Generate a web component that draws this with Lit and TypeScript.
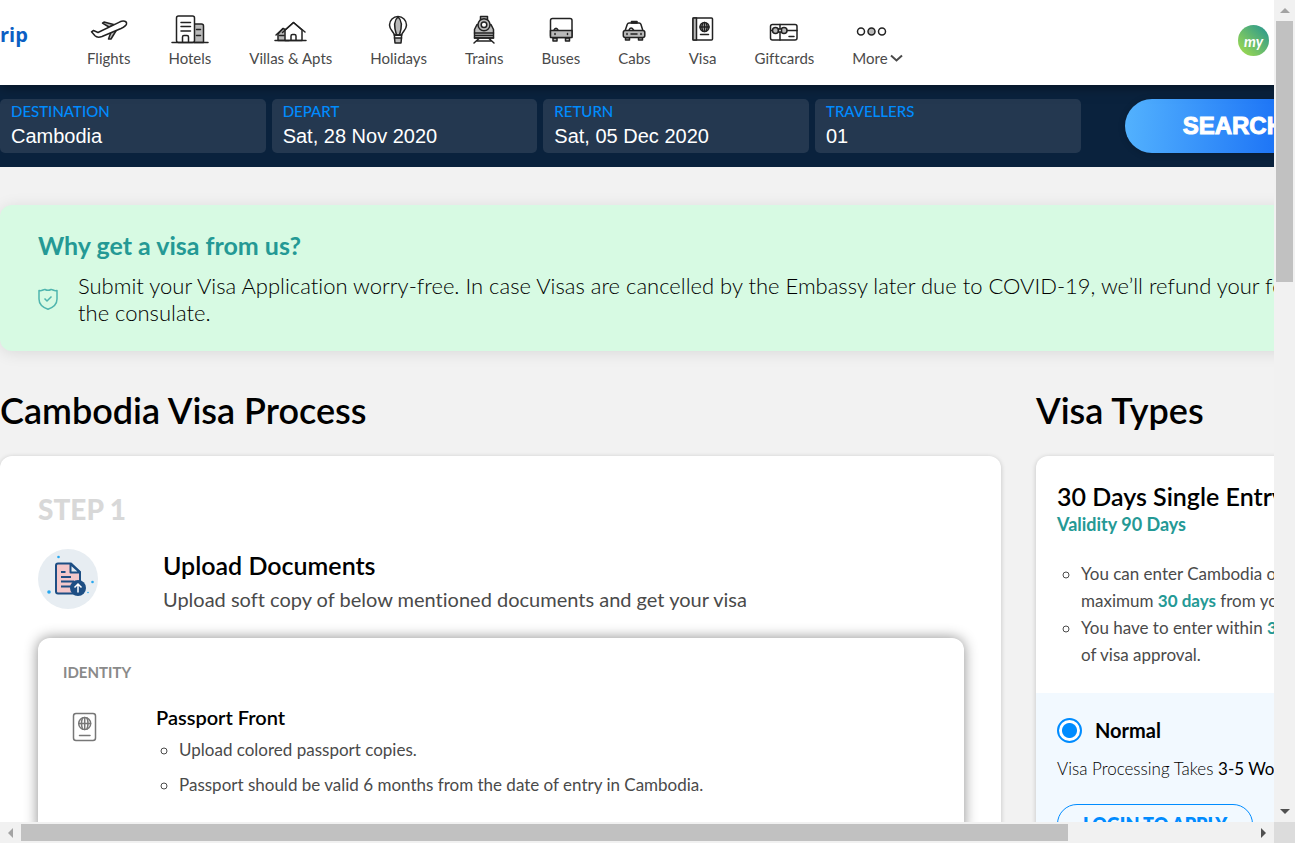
import { LitElement, html, css, svg } from "lit";
import { customElement } from "lit/decorators.js";

const icons = {
  flights: svg`<svg width="38" height="36" viewBox="0 0 38 36" class="icon">
    <path class="shade" d="M19 15 12.500 11.200 14 10 24.500 12.800zM21 20 18.500 27 21 27 26.500 18z"/>
    <path class="paper" d="M1.500 19.800 3.500 18.500 8 20.500 30 9.800C33.500 8.300 37 9.300 36.500 12 36 14 34.500 14.800 31 16.500L12 24.500C9 25.500 6.500 25.300 5 23.800z"/>
  </svg>`,
  hotels: svg`<svg width="38" height="36" viewBox="0 0 38 36" class="icon">
    <path class="shade" d="M23 12h7.500a2 2 0 0 1 2 2v16.500H23z"/>
    <rect class="paper" x="5.500" y="4" width="18" height="26.500" rx="2"/>
    <path d="M10 10.500h9.500M10 14.500h9.500M10 19h9.500M25.500 17.500h4M25.500 23.500h4M11.500 30v-5q0-1.500 1.500-1.500h3q1.500 0 1.500 1.500v5M1 30.500h36"/>
  </svg>`,
  villas: svg`<svg width="38" height="36" viewBox="0 0 38 36" class="icon">
    <path class="shade" d="M6 28.500V22L11 16.500 17 19V28.500z"/>
    <path class="paper" d="M13 28.500V18L21.500 10.500 30 18V28.500z"/>
    <path d="M4 23 11 16.500M10.500 20.500 21.500 10.500 33 20M7.500 23.500H12M19 28v-4q0-1.500 1.500-1.500h2q1.500 0 1.500 1.500v4M3 28.500h31"/>
  </svg>`,
  holidays: svg`<svg width="38" height="36" viewBox="0 0 38 36" class="icon">
    <path class="paper" d="M14.500 23C13 19 9.500 17.500 9.500 13a8.500 8.500 0 0 1 17 0C26.500 17.500 23 19 21.500 23z"/>
    <path class="shade" d="M16.500 23C14 15 14 8 18 5 22 8 22 15 19.500 23z"/>
    <path d="M14 23h8M14.500 23v3M21.500 23v3"/>
    <path class="shade" d="M14.500 26h7l-.5 5h-6z"/>
  </svg>`,
  trains: svg`<svg width="38" height="36" viewBox="0 0 38 36" class="icon">
    <path class="shade" d="M15.500 8V4.500h7v3.500M9.500 23.500h19V26h-19zM9.500 17.500 12 12.500h14L28.500 17.500V23.500h-19z"/>
    <circle class="shade" cx="19" cy="12.800" r="6"/><circle class="paper" cx="19" cy="12.800" r="2.800"/>
    <path d="M9.500 21h19M9.500 26h19M14 26.500 9 31M24 26.500 29 31M12 29h14"/>
  </svg>`,
  buses: svg`<svg width="38" height="36" viewBox="0 0 38 36" class="icon">
    <path class="shade" d="M11 26h4v3h-4zM23.500 26h4v3h-4z"/>
    <rect class="paper" x="8.500" y="6.500" width="21.500" height="19" rx="2"/>
    <path class="shade" d="M8.500 18.500H30v7H8.500zM11.500 18.500q2.500-4.500 5 0"/>
    <path d="M13 21.500v1M25.500 21.500v1"/>
  </svg>`,
  cabs: svg`<svg width="38" height="36" viewBox="0 0 38 36" class="icon">
    <path class="shade" d="M10.500 25.500h4v2.500h-4zM23.500 25.500h4v2.500h-4z"/>
    <path class="paper" d="M10 19 12.300 12.300q.5-1.300 1.800-1.300h10q1.300 0 1.800 1.300L28 19z"/>
    <path class="solid" d="M16.500 9.500h5.500V11h-5.500z"/>
    <rect class="shade" x="8.300" y="18.500" width="21.500" height="7" rx="2"/>
    <path d="M12 21.500v1M26 21.500v1M16 22h6M14 18q2-4 4.500 0"/>
  </svg>`,
  visa: svg`<svg width="38" height="36" viewBox="0 0 38 36" class="icon">
    <rect class="paper" x="9" y="6" width="19.500" height="22" rx="1"/>
    <path class="shade" d="M9 6h3.500v22H9z"/>
    <circle class="shade" cx="20.500" cy="15" r="4.500"/>
    <path d="M16 15h9M20.500 10.500v9M18.500 11.500q-1.500 3.500 0 7M22.500 11.500q1.500 3.500 0 7M16.500 22.500h8"/>
  </svg>`,
  gift: svg`<svg width="38" height="36" viewBox="0 0 38 36" class="icon">
    <rect class="paper" x="5.500" y="12.500" width="26.500" height="15.500" rx="2"/>
    <path d="M6 18.500h26M15 12.500v15.500M24 24.500h5"/>
    <circle class="shade" cx="10.500" cy="18.500" r="3"/><circle class="shade" cx="19" cy="18.500" r="3"/>
    <rect class="paper" x="13.500" y="17" width="3" height="3"/>
  </svg>`,
  more: svg`<svg width="38" height="36" viewBox="0 0 38 36" class="icon">
    <circle class="paper" cx="9" cy="19.500" r="3.500"/><circle class="shade" cx="19.500" cy="19.500" r="3.500"/><circle class="paper" cx="30" cy="19.500" r="3.500"/>
  </svg>`,
};

const navItems = [
  { label: "Flights", icon: icons.flights },
  { label: "Hotels", icon: icons.hotels },
  { label: "Villas & Apts", icon: icons.villas },
  { label: "Holidays", icon: icons.holidays },
  { label: "Trains", icon: icons.trains },
  { label: "Buses", icon: icons.buses },
  { label: "Cabs", icon: icons.cabs },
  { label: "Visa", icon: icons.visa },
  { label: "Giftcards", icon: icons.gift },
  { label: "More", icon: icons.more, menu: true },
];

const fields = [
  { id: "destination", label: "DESTINATION", value: "Cambodia" },
  { id: "depart", label: "DEPART", value: "Sat, 28 Nov 2020" },
  { id: "return", label: "RETURN", value: "Sat, 05 Dec 2020" },
  { id: "travellers", label: "TRAVELLERS", value: "01" },
];

@customElement("app-root")
export class AppRoot extends LitElement {
  static styles = css`
    :host {
      display: grid;
      grid-template-columns: minmax(0, 1fr) 21px;
      grid-template-rows: minmax(0, 1fr) 21px;
      height: 100vh;
      background: #f1f1f1;
      color: #000;
      font-family: Lato, sans-serif;
      font-variant-ligatures: none;
    }
    * { box-sizing: border-box; }
    h1, h2, h3, h4, p, ul { margin: 0; padding: 0; }
    svg { display: block; }
    .view { overflow: hidden; background: #f2f2f2; }
    .page { min-width: 1342px; }

    .header {
      position: relative;
      display: flex;
      align-items: center;
      height: 85px;
      padding-right: 73px;
      background: #fff;
      box-shadow: 0 1px 12px rgba(0, 0, 0, 0.5);
    }
    .logo {
      width: 87px;
      padding-bottom: 16px;
      color: #0b5fc4;
      font: 700 20px/28px "Open Sans", sans-serif;
      text-decoration: none;
    }
    .nav { display: flex; flex: 1; gap: 38px; }
    .nav-item {
      display: flex;
      flex-direction: column;
      align-items: center;
      padding-bottom: 5px;
      color: #4a4a4a;
      font-size: 15px;
      line-height: 20px;
      text-decoration: none;
      white-space: nowrap;
    }
    .nav-label { display: flex; align-items: center; gap: 2px; }
    .icon { margin: 0 -5px; fill: none; stroke: #222; stroke-width: 1.5; stroke-linecap: round; stroke-linejoin: round; }
    .nav-menu .icon { align-self: flex-start; margin: 0; }
    .shade { fill: #b9b9b9; }
    .paper { fill: #fff; }
    .solid { fill: #222; }
    .chevron { fill: none; stroke: #4a4a4a; stroke-width: 2; }
    .avatar {
      width: 31px;
      height: 31px;
      margin-bottom: 4px;
      padding: 0;
      border: 0;
      border-radius: 50%;
      background: linear-gradient(45deg, #a8e04a, #219393);
      color: #fff;
      font: italic 700 15px/28px Lato, sans-serif;
      text-align: center;
    }

    .search { display: flex; gap: 44px; padding: 14px 0; background: #0a223d; }
    .fields { display: grid; grid-template-columns: repeat(4, 1fr); flex: 1; gap: 6px; }
    .field {
      display: flex;
      flex-direction: column;
      gap: 1px;
      height: 54px;
      padding: 2px 11px;
      border-radius: 5px;
      background: #243850;
    }
    .field-label { color: #008cff; font-size: 15px; line-height: 20px; font-weight: 500; }
    .field-input {
      width: 100%;
      padding: 0;
      border: 0;
      outline: 0;
      background: none;
      color: #fff;
      font: 400 20px/28px "Liberation Sans", Arial, sans-serif;
    }
    .search-button {
      padding: 0 58px;
      border: 0;
      border-radius: 27px;
      background: linear-gradient(93deg, #53b2fe, #065af3);
      box-shadow: 0 1px 7px rgba(0, 0, 0, 0.2);
      color: #fff;
      font: 700 24px/28px "Liberation Sans", Arial, sans-serif;
      -webkit-text-stroke: 1px #fff;
    }

    .banner {
      margin-top: 38px;
      padding: 25px 38px;
      border-radius: 12px;
      background: #d7fae3;
      box-shadow: 0 2px 16px rgba(0, 0, 0, 0.1);
    }
    .banner-title { color: #249995; font-size: 25px; line-height: 30px; font-weight: 700; }
    .banner-row { display: flex; align-items: center; gap: 20px; padding-top: 12px; }
    .banner-text { font-size: 22px; line-height: 27px; font-weight: 300; white-space: nowrap; }
    .shield { flex: none; fill: none; stroke: #4fb5ae; stroke-width: 1.5; stroke-linejoin: round; }

    .columns {
      display: grid;
      grid-template-columns: minmax(0, 1fr) 306px;
      gap: 35px;
      padding-top: 37px;
    }
    .heading { padding-bottom: 24px; font-size: 36px; line-height: 44px; font-weight: 600; }
    .card { border-radius: 12px; background: #fff; box-shadow: 0 1px 5px rgba(0, 0, 0, 0.2); overflow: hidden; }
    .process { padding: 35px 37px 38px 38px; }
    .step { color: #d8d8d8; font-size: 28px; line-height: 36px; font-weight: 900; }
    .step-row { display: flex; align-items: center; gap: 65px; padding: 18px 0 25px; }
    .step-copy { padding-top: 4px; }
    .step-title { font-size: 25px; line-height: 32px; font-weight: 600; }
    .step-text { padding-top: 4px; color: #4a4a4a; font-size: 20px; line-height: 28px; }
    .documents {
      padding: 24px 25px 36px;
      border-radius: 12px;
      background: #fff;
      box-shadow: 0 0 14px rgba(0, 0, 0, 0.45);
    }
    .group { color: #8a8a8a; font-size: 15px; line-height: 20px; font-weight: 700; }
    .document { display: flex; align-items: flex-start; gap: 53px; padding-top: 23px; }
    .document-title { font-size: 20px; line-height: 24px; font-weight: 600; }
    .document-icon { margin: 6px 0 0 4px; fill: none; stroke: #777; stroke-width: 1.5; stroke-linecap: round; }
    .list { padding-left: 23px; list-style: circle; color: #4a4a4a; font-size: 17px; }
    .document .list { line-height: 35px; padding-top: 3px; }

    .type-top { padding: 25px 21px; }
    .type-title { font-size: 25px; line-height: 31px; font-weight: 600; white-space: nowrap; }
    .accent { color: #249995; font-weight: 700; }
    .validity { padding-bottom: 23px; font-size: 18px; line-height: 25px; }
    .type-top .list { line-height: 27px; padding-left: 24px; white-space: nowrap; }
    .type-option { padding: 23px 21px 30px; background: #f2f9ff; }
    .option { display: flex; align-items: center; gap: 13px; font-size: 20px; line-height: 28px; font-weight: 700; }
    .radio {
      appearance: none;
      width: 25px;
      height: 25px;
      margin: 0;
      border: 2px solid #008cff;
      border-radius: 50%;
      background: radial-gradient(circle, #008cff 7px, #fff 8px);
    }
    .processing { padding: 11px 0 22px; font-size: 17px; line-height: 27px; font-weight: 300; white-space: nowrap; }
    .strong { font-weight: 400; }
    .apply {
      height: 40px;
      padding: 0 25px;
      border: 1px solid #008cff;
      border-radius: 20px;
      background: none;
      color: #008cff;
      font: 800 18px/24px Lato, sans-serif;
    }

    .bar { display: flex; align-items: center; justify-content: space-between; }
    .bar-y { flex-direction: column; }
    .arrow { display: grid; place-items: center; width: 21px; height: 21px; flex: none; }
    .track { flex: 1; display: flex; }
    .bar-y .track { flex-direction: column; align-items: center; width: 21px; }
    .bar-x .track { align-items: center; height: 21px; }
    .thumb { background: #c1c1c1; }
    .bar-y .thumb { width: 17px; height: 33.4%; }
    .bar-x .thumb { height: 17px; width: 85%; }
    .corner { background: #dcdcdc; }
  `;

  render() {
    return html`
      <div class="view">
        <div class="page">
          <header class="header">
            <a class="logo" href="#">rip</a>
            <nav class="nav">
              ${navItems.map(
                (item) => html`<a class="nav-item ${item.menu ? "nav-menu" : ""}" href="#">
                  ${item.icon}
                  <span class="nav-label">${item.label}${item.menu
                    ? html`<svg class="chevron" width="13" height="8" viewBox="0 0 13 8"><path d="M1 1.500 6.500 6.500 12 1.500"/></svg>`
                    : ""}</span>
                </a>`
              )}
            </nav>
            <button class="avatar">my</button>
          </header>

          <form class="search">
            <div class="fields">
              ${fields.map(
                (f) => html`<div class="field">
                  <label class="field-label" for=${f.id}>${f.label}</label>
                  <input class="field-input" id=${f.id} .value=${f.value} readonly />
                </div>`
              )}
            </div>
            <button class="search-button" type="button">SEARCH</button>
          </form>

          <section class="banner">
            <h3 class="banner-title">Why get a visa from us?</h3>
            <div class="banner-row">
              <svg class="shield" width="20" height="22" viewBox="0 0 20 22">
                <path d="M1 2.500C4 3.500 5.500 1 7 1.500 9 2.500 11 2.500 13 1.500 14.500 1 16 3.500 19 2.500V11C19 16.500 15 19.500 10 21.200 5 19.500 1 16.500 1 11z"/>
                <path d="M6.500 10.500 9 13 13.500 8.500"/>
              </svg>
              <p class="banner-text">
                Submit your Visa Application worry-free. In case Visas are cancelled by the Embassy later due to COVID-19, we’ll refund your fees to<br />the consulate.
              </p>
            </div>
          </section>

          <div class="columns">
            <main>
              <h1 class="heading">Cambodia Visa Process</h1>
              <section class="card process">
                <h2 class="step">STEP 1</h2>
                <div class="step-row">
                  <svg width="60" height="60" viewBox="0 0 60 60">
                    <circle cx="30" cy="30" r="30" fill="#e7edf2"/>
                    <path d="M20 14.500h13L42 23v21.500H20q-2 0-2-2v-26q0-2 2-2z" fill="#f4c7ca" stroke="#1d4e84" stroke-width="2" stroke-linejoin="round"/>
                    <path d="M32.500 15v8.500H42z" fill="#e7edf2" stroke="#1d4e84" stroke-width="2" stroke-linejoin="round"/>
                    <path d="M23 23h4.500M23 28h10M23 32.500h13M23 37.500h11" stroke="#1d4e84" stroke-width="2"/>
                    <circle cx="40" cy="39" r="8" fill="#1d4e84"/>
                    <path d="M40 43.500v-8M36.500 38.500 40 35l3.500 3.500" fill="none" stroke="#fff" stroke-width="1.500"/>
                    <g fill="#27a7ee"><circle cx="20.500" cy="8" r="1.300"/><circle cx="11" cy="43" r="1.800"/><circle cx="54.500" cy="33" r="1.300"/><circle cx="50" cy="43.500" r=".8"/></g>
                  </svg>
                  <div class="step-copy">
                    <h3 class="step-title">Upload Documents</h3>
                    <p class="step-text">Upload soft copy of below mentioned documents and get your visa</p>
                  </div>
                </div>
                <div class="documents">
                  <h4 class="group">IDENTITY</h4>
                  <div class="document">
                    <svg class="document-icon" width="36" height="32" viewBox="0 0 36 32">
                      <rect x="6.500" y="2.500" width="22" height="27" rx="2.500"/>
                      <circle cx="17.700" cy="12.500" r="6"/>
                      <path d="M12 12.500h11.500M17.700 6.500v12M15.500 7q-2 5.500 0 11M20 7q2 5.500 0 11M12.500 24.500h10.500"/>
                    </svg>
                    <div>
                      <h4 class="document-title">Passport Front</h4>
                      <ul class="list">
                        <li>Upload colored passport copies.</li>
                        <li>Passport should be valid 6 months from the date of entry in Cambodia.</li>
                      </ul>
                    </div>
                  </div>
                </div>
              </section>
            </main>

            <aside>
              <h1 class="heading">Visa Types</h1>
              <section class="card">
                <div class="type-top">
                  <h3 class="type-title">30 Days Single Entry</h3>
                  <p class="accent validity">Validity 90 Days</p>
                  <ul class="list">
                    <li>You can enter Cambodia only for<br />maximum <span class="accent">30 days</span> from your entry</li>
                    <li>You have to enter within <span class="accent">30 days</span><br />of visa approval.</li>
                  </ul>
                </div>
                <div class="type-option">
                  <label class="option"><input class="radio" type="radio" name="type" checked />Normal</label>
                  <p class="processing">Visa Processing Takes <span class="strong">3-5 Working Days</span></p>
                  <button class="apply">LOGIN TO APPLY</button>
                </div>
              </section>
            </aside>
          </div>
        </div>
      </div>

      <div class="bar bar-y">
        <span class="arrow"><svg width="10" height="5"><path d="M0 5 5 0 10 5z" fill="#a3a3a3"/></svg></span>
        <div class="track"><div class="thumb"></div></div>
        <span class="arrow"><svg width="10" height="5"><path d="M0 0 5 5 10 0z" fill="#505050"/></svg></span>
      </div>
      <div class="bar bar-x">
        <span class="arrow"><svg width="5" height="10"><path d="M5 0 0 5 5 10z" fill="#a3a3a3"/></svg></span>
        <div class="track"><div class="thumb"></div></div>
        <span class="arrow"><svg width="5" height="10"><path d="M0 0 5 5 0 10z" fill="#505050"/></svg></span>
      </div>
      <div class="corner"></div>
    `;
  }
}
